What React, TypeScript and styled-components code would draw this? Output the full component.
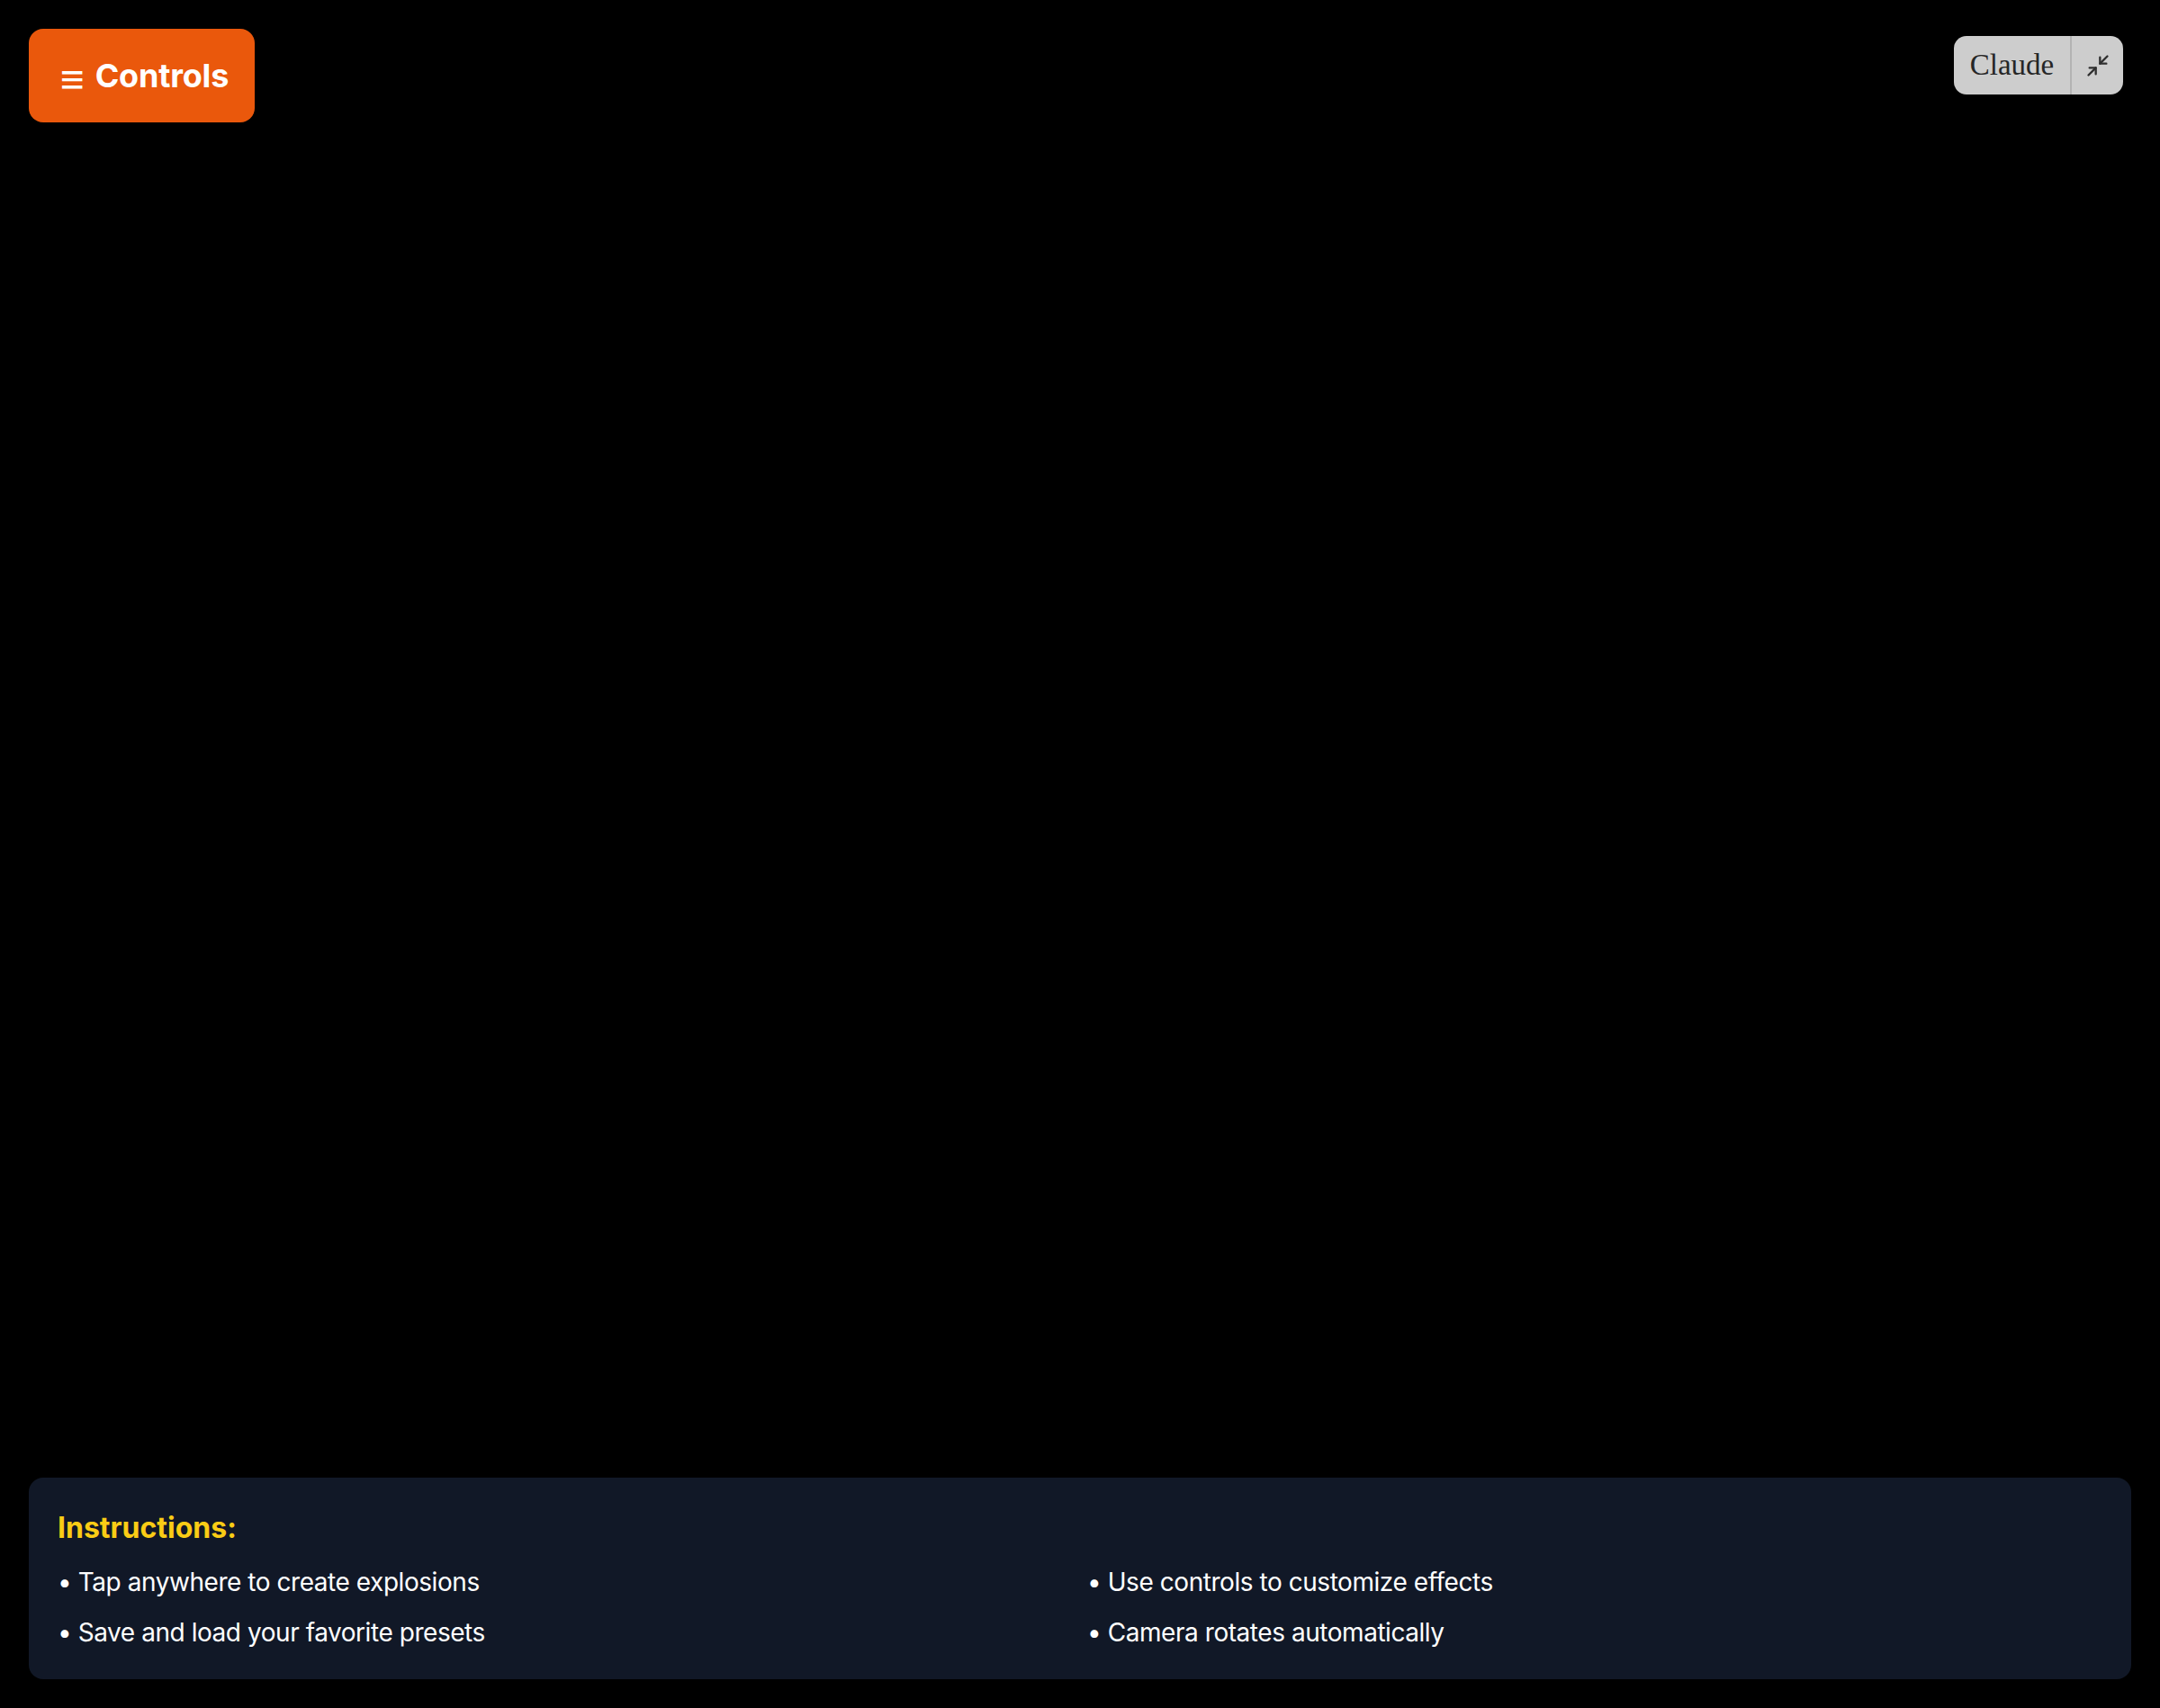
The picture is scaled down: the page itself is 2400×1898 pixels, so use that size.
import { FC } from 'react';
import styled, { createGlobalStyle } from 'styled-components';
import { Minimize2 } from 'lucide-react';

const GlobalStyle = createGlobalStyle`
  html, body {
    margin: 0;
    padding: 0;
    background: #000;
    font-family: Inter, 'Noto Sans', 'Liberation Sans', sans-serif;
  }
  * {
    box-sizing: border-box;
  }
`;

const tips = [
  'Tap anywhere to create explosions',
  'Use controls to customize effects',
  'Save and load your favorite presets',
  'Camera rotates automatically',
];

const App: FC = () => {
  return (
    <>
      <GlobalStyle />
      <Page>
        <TopBar>
          <ControlsButton type='button'>
            <Burger>≡</Burger>
            Controls
          </ControlsButton>
        </TopBar>
        <Instructions>
          <Heading>Instructions:</Heading>
          <TipGrid>
            {tips.map((tip) => (
              <Tip key={tip}>• {tip}</Tip>
            ))}
          </TipGrid>
        </Instructions>
        <ClaudeBadge>
          <BadgeLabel>Claude</BadgeLabel>
          <BadgeIcon>
            <Minimize2 size={28} strokeWidth={2} color='#2f2f2f' />
          </BadgeIcon>
        </ClaudeBadge>
      </Page>
    </>
  );
};

export default App;

const Page = styled.div`
  position: relative;
  display: flex;
  flex-direction: column;
  justify-content: space-between;
  height: 100vh;
  padding: 32px;
  background: #000;
`;

const TopBar = styled.div`
  display: flex;
  align-items: flex-start;
`;

const ControlsButton = styled.button`
  display: flex;
  align-items: center;
  gap: 12px;
  width: 251px;
  height: 104px;
  padding: 0 0 0 35px;
  border: none;
  border-radius: 16px;
  background: #ea580c;
  color: #fff;
  font-family: Inter, 'Noto Sans', sans-serif;
  font-size: 36px;
  font-weight: 700;
  line-height: 56px;
  letter-spacing: -0.2px;
  cursor: pointer;
`;

const Burger = styled.span`
  font-size: 46px;
  font-weight: 700;
  position: relative;
  top: 3px;
`;

const Instructions = styled.div`
  padding: 32px;
  border-radius: 16px;
  background: #111827;
`;

const Heading = styled.h2`
  margin: 0 0 16px;
  color: #facc15;
  font-size: 32px;
  font-weight: 700;
  line-height: 48px;
`;

const TipGrid = styled.div`
  display: grid;
  grid-template-columns: 1fr 1fr;
  gap: 16px;
`;

const Tip = styled.div`
  color: #fff;
  font-size: 28px;
  line-height: 40px;
  letter-spacing: -0.45px;
`;

const ClaudeBadge = styled.div`
  position: absolute;
  top: 40px;
  right: 41px;
  display: flex;
  height: 65px;
  border-radius: 14px;
  background: #cdcdcd;
  overflow: hidden;
`;

const BadgeLabel = styled.div`
  display: flex;
  align-items: center;
  width: 131px;
  justify-content: center;
  color: #262626;
  font-family: 'Liberation Serif', 'DejaVu Serif', serif;
  font-size: 33px;
  border-right: 2px solid #b3b3b3;
`;

const BadgeIcon = styled.div`
  display: flex;
  align-items: center;
  justify-content: center;
  width: 57px;
`;
